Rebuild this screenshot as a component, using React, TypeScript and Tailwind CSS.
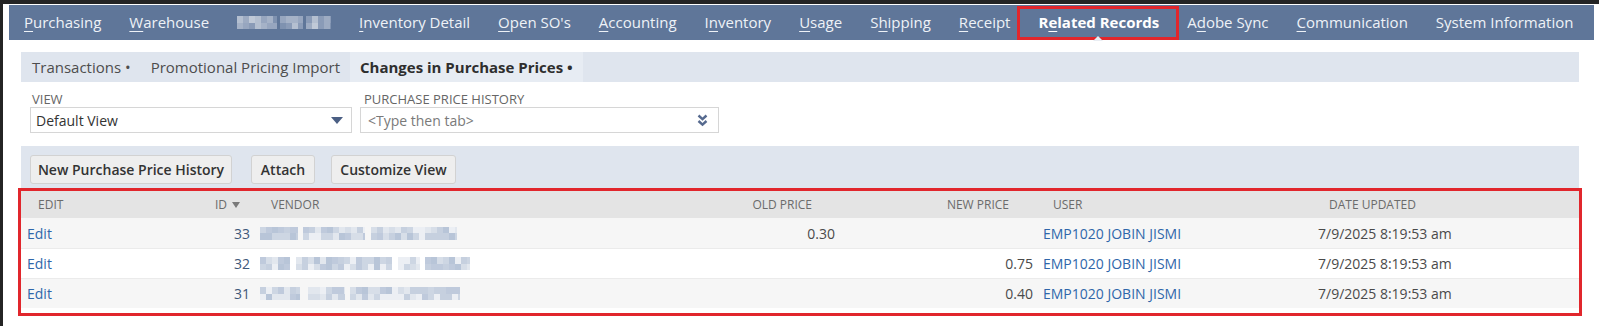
import React from "react";

const lcg = (seed: number) => {
  let s = seed;
  return () => {
    s = (s * 1103515245 + 12345) & 0x7fffffff;
    return s / 0x7fffffff;
  };
};

function PixelBlur({
  segments,
  seed,
  palette,
  h = 12,
  cell = 5,
}: {
  segments: number[];
  seed: number;
  palette: string[];
  h?: number;
  cell?: number;
}) {
  const rnd = lcg(seed);
  const pick = () => palette[Math.floor(rnd() * palette.length)];
  return (
    <div className="flex" style={{ height: h }}>
      {segments.map((w, i) =>
        i % 2 === 1 ? (
          <div key={i} style={{ width: w }} />
        ) : (
          <div key={i} className="flex" style={{ width: w }}>
            {Array.from({ length: Math.ceil(w / cell) }).map((_, j) => (
              <div key={j} className="flex flex-col" style={{ width: Math.min(cell, w - j * cell) }}>
                <div className="flex-1" style={{ background: pick() }} />
                <div className="flex-1" style={{ background: pick() }} />
              </div>
            ))}
          </div>
        )
      )}
    </div>
  );
}

type NavItem = { pre: string; u: string; post: string; active?: boolean; blur?: boolean };

const navItems: NavItem[] = [
  { pre: "", u: "P", post: "urchasing" },
  { pre: "", u: "W", post: "arehouse" },
  { pre: "", u: "", post: "", blur: true },
  { pre: "", u: "I", post: "nventory Detail" },
  { pre: "", u: "O", post: "pen SO's" },
  { pre: "", u: "A", post: "ccounting" },
  { pre: "I", u: "n", post: "ventory" },
  { pre: "", u: "U", post: "sage" },
  { pre: "S", u: "h", post: "ipping" },
  { pre: "", u: "R", post: "eceipt" },
  { pre: "R", u: "e", post: "lated Records", active: true },
  { pre: "A", u: "d", post: "obe Sync" },
  { pre: "", u: "C", post: "ommunication" },
  { pre: "System Information", u: "", post: "" },
];

const navBlurPalette = ["#8a9bb7", "#a5b2c7", "#97a6bf", "#b4bfd0", "#7f92b0", "#c0c9d7", "#9dabc2"];
const vendorPalette = ["#c6d0df", "#d7dee8", "#b8c5d8", "#e2e7ee", "#cdd6e3", "#bfcadc", "#eceff4"];

const rows = [
  { id: "33", old: "0.30", neu: "", bg: "bg-[#f6f6f6]", seg: [38, 5, 62, 6, 86], seed: 11 },
  { id: "32", old: "", neu: "0.75", bg: "bg-white", seg: [30, 6, 96, 6, 22, 5, 45], seed: 23 },
  { id: "31", old: "", neu: "0.40", bg: "bg-[#f6f6f6]", seg: [40, 8, 37, 5, 110], seed: 37 },
];

const cols = "grid grid-cols-[179px_55px_365px_220px_196px_274px_1fr]";

function Caret() {
  return (
    <svg width="12" height="7" viewBox="0 0 12 7">
      <polygon points="0,0 12,0 6,7" fill="#4b5f84" />
    </svg>
  );
}

function DoubleChevron() {
  return (
    <svg width="11" height="13" viewBox="0 0 11 13">
      <path d="M1.5 1.5 L5.5 5.2 L9.5 1.5" fill="none" stroke="#566a8f" strokeWidth="2.4" />
      <path d="M1.5 7 L5.5 10.7 L9.5 7" fill="none" stroke="#566a8f" strokeWidth="2.4" />
    </svg>
  );
}

function SortArrow() {
  return (
    <svg width="8" height="6" viewBox="0 0 8 6" className="ml-[5px]">
      <polygon points="0,0 8,0 4,6" fill="#7a7a7a" />
    </svg>
  );
}

export default function App() {
  return (
    <div className="w-[1599px] h-[326px] overflow-hidden bg-white border-l-[3px] border-t-[4px] border-[#242424] font-['Open_Sans',sans-serif]">
      <nav className="ml-[6px] mt-[1px] w-[1585px] h-[35px] bg-[#5f7699] flex items-stretch pl-[1px] text-[15px] text-[#eef2f7]">
        {navItems.map((it, i) =>
          it.blur ? (
            <div key={i} className="px-[14px] flex items-center">
              <PixelBlur segments={[40, 3, 23, 3, 25]} seed={5} palette={navBlurPalette} h={13} cell={6} />
            </div>
          ) : (
            <div
              key={i}
              className={`relative px-[14px] flex items-center whitespace-nowrap ${it.active ? "font-bold text-white" : ""}`}
            >
              <span>
                {it.pre}
                {it.u && <span className="underline underline-offset-[3px] decoration-1">{it.u}</span>}
                {it.post}
              </span>
              {it.active && (
                <>
                  <span className="absolute left-[-7px] right-[-6px] top-[1px] bottom-[0px] border-[3px] border-[#e1262c]" />
                  <span className="absolute bottom-[-1px] left-[69px] w-0 h-0 border-l-[5px] border-r-[5px] border-b-[5px] border-l-transparent border-r-transparent border-b-[#e9edf3]" />
                </>
              )}
            </div>
          )
        )}
      </nav>

      <div className="ml-[18px] w-[1558px] mt-[12px]">
        {/* sub tabs */}
        <div className="h-[30px] bg-[#dfe5ee] flex items-stretch text-[15px] text-[#4d4d4d]">
          <div className="pl-[11px] pr-[10px] flex items-center">Transactions •</div>
          <div className="px-[10px] flex items-center">Promotional Pricing Import</div>
          <div className="px-[10px] flex items-center bg-[#e7ecf3] font-bold text-[#2e2e2e]">
            Changes in Purchase Prices •
          </div>
        </div>

        {/* view fields */}
        <div className="bg-white h-[64px] pt-[9px] pl-[9px] flex gap-[8px]">
          <div className="w-[322px]">
            <div className="text-[13px] leading-[16px] text-[#666] uppercase pl-[2px]">View</div>
            <div className="h-[26px] border border-[#d6d6d6] flex items-center justify-between pl-[5px] pr-[8px] text-[14px] text-[#333]">
              <span>Default View</span>
              <Caret />
            </div>
          </div>
          <div className="w-[359px]">
            <div className="text-[13px] leading-[16px] text-[#666] uppercase pl-[4px]">Purchase Price History</div>
            <div className="h-[26px] border border-[#d6d6d6] flex items-center justify-between pl-[7px] pr-[10px] text-[14px] text-[#7a7a7a]">
              <span>&lt;Type then tab&gt;</span>
              <DoubleChevron />
            </div>
          </div>
        </div>

        {/* buttons */}
        <div className="bg-[#dfe5ee] h-[45px] pt-[9px] pl-[9px] flex items-start text-[14px] font-semibold text-[#333]">
          <div className="w-[202px] h-[29px] rounded-[3px] border border-[#d2d2d2] bg-[#eeeeee] flex items-center justify-center">
            New Purchase Price History
          </div>
          <div className="ml-[19px] w-[64px] h-[29px] rounded-[3px] border border-[#d2d2d2] bg-[#eeeeee] flex items-center justify-center">
            Attach
          </div>
          <div className="ml-[16px] w-[125px] h-[29px] rounded-[3px] border border-[#d2d2d2] bg-[#eeeeee] flex items-center justify-center">
            Customize View
          </div>
        </div>

        {/* table */}
        <div className="outline-[3px] outline-solid outline-[#e1262c] pb-[5px] bg-white">
          <div className={`${cols} h-[27px] bg-[#e4e4e4] items-center text-[12px] text-[#6b6b6b] uppercase`}>
            <div className="pl-[17px]">Edit</div>
            <div className="pr-[15px] flex items-center justify-end">
              ID
              <SortArrow />
            </div>
            <div className="pl-[16px]">Vendor</div>
            <div className="pr-[28px] text-right">Old Price</div>
            <div className="pr-[27px] text-right">New Price</div>
            <div className="pl-[17px]">User</div>
            <div className="pl-[19px]">Date Updated</div>
          </div>
          {rows.map((r, i) => (
            <div
              key={r.id}
              className={`${cols} h-[30px] items-center text-[14px] ${r.bg} ${i > 0 ? "border-t border-[#ebebeb]" : ""}`}
            >
              <div className="pl-[6px] text-[#2f66aa]">Edit</div>
              <div className="pr-[5px] text-right text-[#3f5879]">{r.id}</div>
              <div className="pl-[5px]">
                <PixelBlur segments={r.seg} seed={r.seed} palette={vendorPalette} h={13} cell={6} />
              </div>
              <div className="pr-[5px] text-right text-[#4a4a4a]">{r.old}</div>
              <div className="pr-[3px] text-right text-[#4a4a4a]">{r.neu}</div>
              <div className="pl-[7px] text-[#2f66aa]">EMP1020 JOBIN JISMI</div>
              <div className="pl-[8px] text-[#4a4a4a]">7/9/2025 8:19:53 am</div>
            </div>
          ))}
        </div>
      </div>
    </div>
  );
}
